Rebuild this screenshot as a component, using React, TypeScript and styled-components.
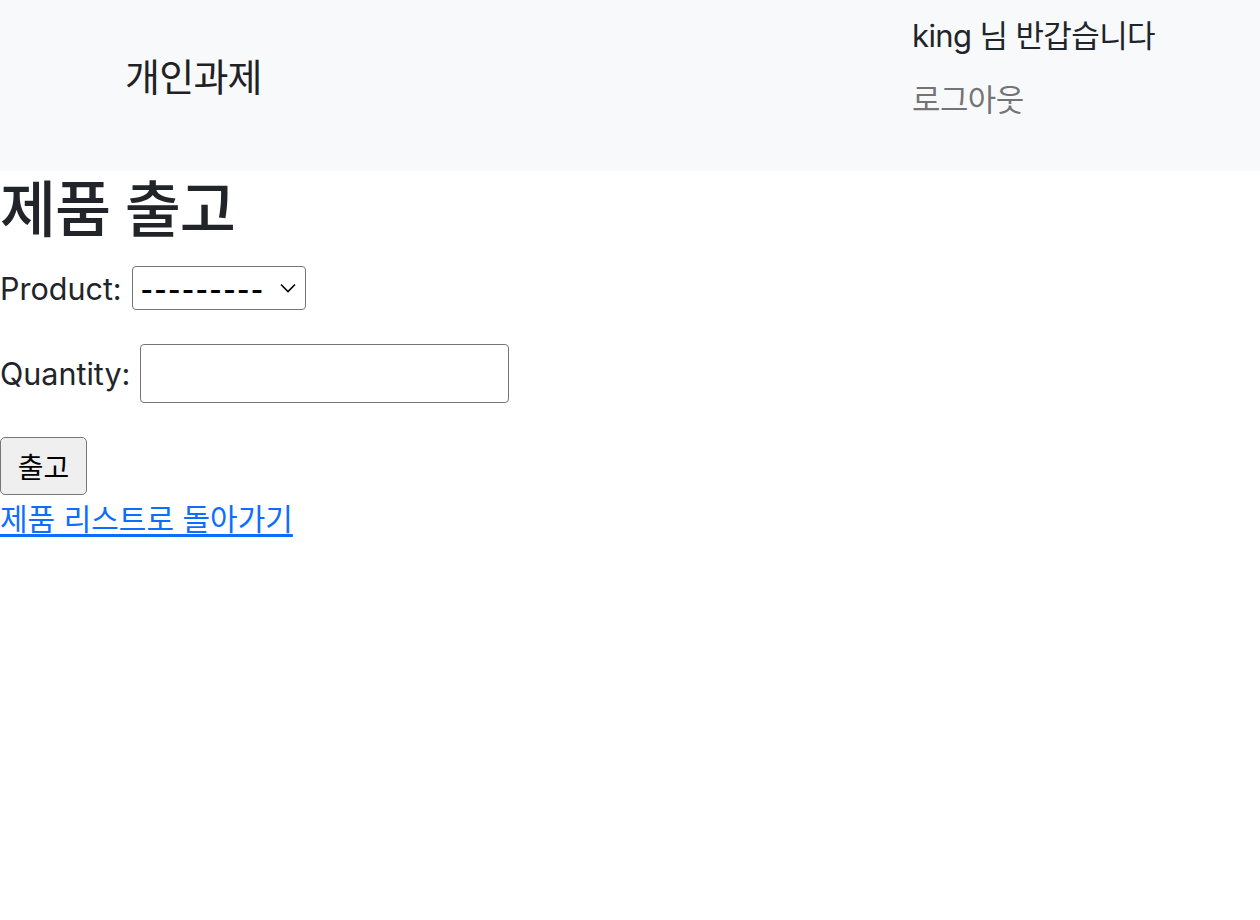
import styled, { createGlobalStyle } from "styled-components";

const GlobalStyle = createGlobalStyle`
	body {
		margin: 0;
		background: #fff;
		color: #212529;
		font-family: Inter, "Noto Sans CJK KR", sans-serif;
	}
`;

const Navbar = styled.nav`
	height: 171px;
	box-sizing: border-box;
	padding-left: 125px;
	background: #f8f9fa;
	display: grid;
	grid-template-columns: 787px 1fr;
	align-items: start;
`;

const Brand = styled.a`
	margin-top: 53px;
	font-size: 38px;
	line-height: 48px;
	letter-spacing: -0.02em;
	color: #1f2124;
	text-decoration: none;
`;

const NavList = styled.ul`
	list-style: none;
	margin: 0;
	padding: 12px 0 0;
	display: flex;
	flex-direction: column;
	gap: 16px;
`;

const NavItem = styled.li<{ $muted?: boolean }>`
	font-size: 31px;
	line-height: 48px;
	letter-spacing: -0.02em;
	color: ${(p) => (p.$muted ? "rgba(0, 0, 0, 0.55)" : "#212529")};
`;

const Title = styled.h2`
	margin: 0 0 19px;
	padding-top: 3px;
	font-size: 61px;
	font-weight: 500;
	line-height: 1.2;
	letter-spacing: -0.02em;
`;

const Form = styled.form`
	display: flex;
	flex-direction: column;
	align-items: flex-start;
	gap: 34px;
`;

const Row = styled.div`
	display: flex;
	align-items: center;
	gap: 10px;
	font-size: 30.5px;
`;

const SelectWrap = styled.span`
	position: relative;
	display: inline-flex;
`;

const Select = styled.select`
	appearance: none;
	width: 174px;
	height: 44px;
	box-sizing: border-box;
	padding: 0 30px 0 8px;
	border: 1.5px solid #767676;
	border-radius: 4px;
	background: #fff;
	color: #000;
	font-family: "Liberation Sans", sans-serif;
	font-size: 36px;
	letter-spacing: 1.8px;
`;

const Chevron = styled.svg`
	position: absolute;
	right: 10px;
	top: 17px;
	pointer-events: none;
`;

const Input = styled.input`
	width: 369px;
	height: 59px;
	box-sizing: border-box;
	border: 1.5px solid #767676;
	border-radius: 4px;
	background: #fff;
	font-size: 26px;
`;

const Button = styled.button`
	width: 87px;
	height: 58px;
	box-sizing: border-box;
	border: 1.5px solid #767676;
	border-radius: 5px;
	background: #efefef;
	color: #000;
	font-family: "Noto Sans CJK KR", sans-serif;
	font-size: 28px;
	padding: 0;
`;

const Actions = styled.div`
	display: flex;
	flex-direction: column;
	align-items: flex-start;
`;

const BackLink = styled.a`
	font-size: 30px;
	line-height: 48px;
	letter-spacing: 0;
	color: #0d6efd;
	text-decoration: underline;
	text-underline-offset: 4px;
`;

export default function App() {
	return (
		<>
			<GlobalStyle />
			<Navbar>
				<Brand href="#">개인과제</Brand>
				<NavList>
					<NavItem>king 님 반갑습니다</NavItem>
					<NavItem $muted>로그아웃</NavItem>
				</NavList>
			</Navbar>
			<Title>제품 출고</Title>
			<Form onSubmit={(e) => e.preventDefault()}>
				<Row>
					<label htmlFor="product">Product:</label>
					<SelectWrap>
						<Select id="product">
							<option>---------</option>
						</Select>
						<Chevron width="16" height="10" viewBox="0 0 16 10">
							<path d="M1 1.5 L8 8.5 L15 1.5" fill="none" stroke="#000" strokeWidth="1.6" />
						</Chevron>
					</SelectWrap>
				</Row>
				<Row>
					<label htmlFor="quantity">Quantity:</label>
					<Input id="quantity" type="number" />
				</Row>
				<Actions>
					<Button type="submit">출고</Button>
					<BackLink href="#">제품 리스트로 돌아가기</BackLink>
				</Actions>
			</Form>
		</>
	);
}
